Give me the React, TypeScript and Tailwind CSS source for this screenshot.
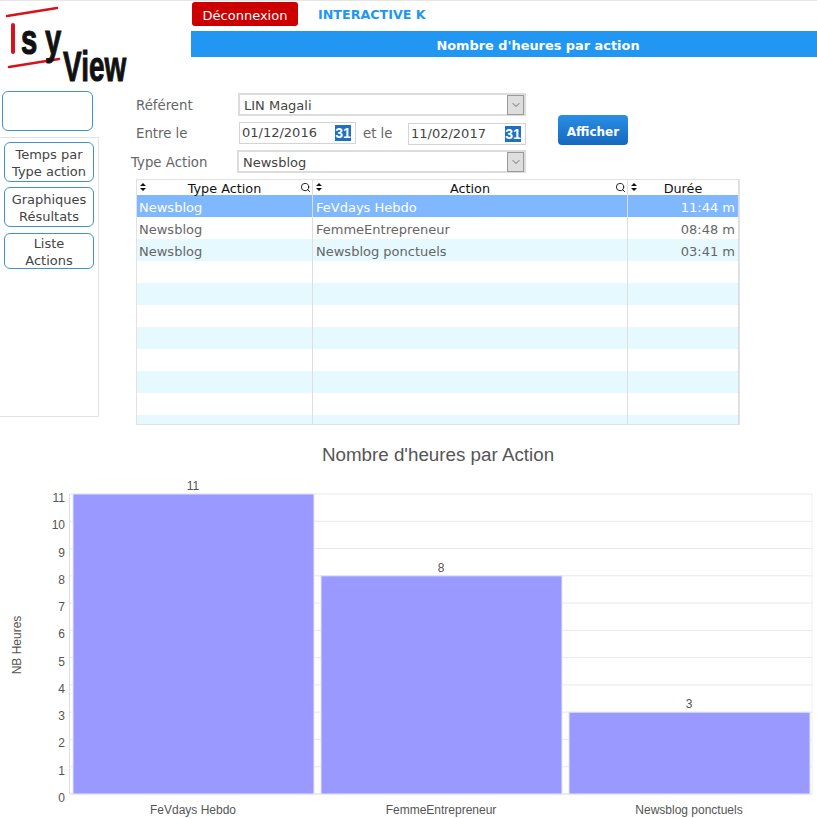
import { ChevronDown, Search } from "lucide-react";

const verdana = "font-['DejaVu_Sans','Liberation_Sans',sans-serif]";

const rows = [
  { type: "Newsblog", action: "FeVdays Hebdo", time: "11:44 m" },
  { type: "Newsblog", action: "FemmeEntrepreneur", time: "08:48 m" },
  { type: "Newsblog", action: "Newsblog ponctuels", time: "03:41 m" },
  { type: "", action: "", time: "" },
  { type: "", action: "", time: "" },
  { type: "", action: "", time: "" },
  { type: "", action: "", time: "" },
  { type: "", action: "", time: "" },
  { type: "", action: "", time: "" },
  { type: "", action: "", time: "" },
  { type: "", action: "", time: "" },
];

const Logo = () => (
  <svg width="131" height="90" viewBox="0 0 131 90" className="block" fontFamily="Liberation Sans" fontWeight="700" fontSize="43" fill="#111" stroke="#111">
    <path d="M7 15 L57 7" stroke="#d8121c" strokeWidth="2.5" strokeLinecap="round" />
    <path d="M13 24 L13 51" stroke="#d8121c" strokeWidth="4" strokeLinecap="round" />
    <path d="M9 66 L59 58" stroke="#d8121c" strokeWidth="2.5" strokeLinecap="round" />
    <text transform="translate(21 53) scale(0.68 1)" strokeWidth="1.2">s</text>
    <text transform="translate(45 53) scale(0.68 1)" strokeWidth="1">y</text>
    <text transform="translate(63 80) scale(0.65 1)" strokeWidth="1">View</text>
  </svg>
);

const SelectBox = ({ value, className }: { value: string; className: string }) => (
  <div className={`flex h-[23px] items-center justify-between border-2 border-[#dcdcdc] bg-white pl-[4px] ${className}`}>
    <span className="pt-[2px] text-[13px] text-[#444]">{value}</span>
    <span className="flex h-[20px] w-[17px] items-center justify-center border border-[#9a9a9a] bg-[#dedede]">
      <ChevronDown size={12} strokeWidth={1.5} className="text-[#444]" />
    </span>
  </div>
);

const DateBox = ({ value, className }: { value: string; className: string }) => (
  <div className={`flex h-[22px] items-center justify-between border border-[#d4d4d4] bg-white pl-[2px] ${className}`}>
    <span className="text-[13px] text-[#444]">{value}</span>
    <span className="flex h-[16px] w-[16px] items-center justify-center bg-[#1f6fc4] font-['Liberation_Sans',sans-serif] text-[14px] font-bold text-white">
      31
    </span>
  </div>
);

const SideButton = ({ lines, className }: { lines: string[]; className: string }) => (
  <div className={`ml-[4px] flex w-[90px] flex-col items-center justify-center rounded-[6px] border border-[#3f95c9] pt-[1px] text-[13px] leading-[17px] text-[#444] ${className}`}>
    {lines.map((l) => (
      <span key={l}>{l}</span>
    ))}
  </div>
);

const SortIcon = () => (
  <svg width="6" height="8" viewBox="0 0 6 8" className="absolute left-[3px] top-[3px]">
    <path d="M3 0 L6 3 H0 Z M3 8 L0 5 H6 Z" fill="#111" />
  </svg>
);

const Chart = () => {
  const left = 70;
  const right = 812;
  const base = 794;
  const top = 494;
  const step = (base - top) / 11;
  const ticks = Array.from({ length: 12 }, (_, i) => i);
  const bars = [
    { x: 73, v: 11, label: "FeVdays Hebdo" },
    { x: 321, v: 8, label: "FemmeEntrepreneur" },
    { x: 569, v: 3, label: "Newsblog ponctuels" },
  ];
  return (
    <svg width="817" height="383" viewBox="0 435 817 383" className="block" fontFamily="Liberation Sans">
      <text x="438" y="461" textAnchor="middle" fontSize="18.8" fill="#555">
        Nombre d'heures par Action
      </text>
      {ticks.map((t) => {
        const y = base - t * step;
        return (
          <g key={t}>
            <line x1={left} x2={right} y1={y} y2={y} stroke={t === 0 ? "#d8d8e0" : "#e8e8e8"} />
            <text x="65" y={y + 8} textAnchor="end" fontSize="12" fill="#555">
              {t}
            </text>
          </g>
        );
      })}
      <line x1={left - 0.5} x2={left - 0.5} y1={top} y2={base} stroke="#dedede" />
      <line x1={right} x2={right} y1={top} y2={base} stroke="#eeeeee" />
      {bars.map((b) => (
        <g key={b.label}>
          <rect x={b.x} y={base - b.v * step} width="241" height={b.v * step} fill="#9999ff" stroke="#e4e4ff" />
          <text x={b.x + 120} y={base - b.v * step - 4} textAnchor="middle" fontSize="12" fill="#555">
            {b.v}
          </text>
          <text x={b.x + 120} y="814" textAnchor="middle" fontSize="12" fill="#555">
            {b.label}
          </text>
        </g>
      ))}
      <text transform="translate(21 645) rotate(-90)" textAnchor="middle" fontSize="12" fill="#555">
        NB Heures
      </text>
    </svg>
  );
};

export default function App() {
  return (
    <div className={`h-[818px] w-[817px] overflow-hidden border-t border-[#e6e6e6] bg-white ${verdana}`}>
      <div className="flex h-[434px]">
        {/* left column */}
        <div className="w-[131px] shrink-0">
          <Logo />
          <div className="ml-[2px] h-[40px] w-[91px] rounded-[6px] border border-[#3f95c9]" />
          <div className="mt-[6px] flex h-[280px] w-[99px] flex-col border-y border-r border-[#e2e2e2] pt-[4px]">
            <SideButton lines={["Temps par", "Type action"]} className="h-[40px]" />
            <SideButton lines={["Graphiques", "Résultats"]} className="mt-[5px] h-[40px]" />
            <SideButton lines={["Liste", "Actions"]} className="mt-[6px] h-[36px]" />
          </div>
        </div>

        <div className="min-w-0 flex-1">
          {/* header */}
          <div className="ml-[60px]">
            <div className="flex h-[30px] items-start pt-[1px]">
              <div className="ml-[1px] flex h-[24px] w-[106px] items-center justify-center rounded-[3px] bg-[#cc0000] pt-[4px] text-[13px] text-white">
                Déconnexion
              </div>
              <span className="ml-[20px] mt-[5px] text-[12.7px] font-bold leading-[16px] text-[#2196f3]">INTERACTIVE K</span>
            </div>
            <div className="flex h-[26px] items-center justify-center bg-[#2196f3] pl-[68px] pt-[4px] text-[12.9px] font-bold text-white">
              Nombre d'heures par action
            </div>
          </div>

          {/* form */}
          <div className="relative mt-[36px] h-[86px] text-[13.3px] text-[#666]">
            <div className="flex h-[23px] items-center">
              <span className="ml-[5px] w-[102px] pt-[2px]">Référent</span>
              <SelectBox value="LIN Magali" className="w-[288px]" />
            </div>
            <div className="mt-[6px] flex h-[23px] items-start">
              <span className="ml-[5px] w-[103px] pt-[2px]">Entre le</span>
              <DateBox value="01/12/2016" className="w-[117px] pr-[4px]" />
              <span className="ml-[7px] w-[45px] pt-[2px]">et le</span>
              <DateBox value="11/02/2017" className="mt-[1px] w-[118px] pr-[4px]" />
            </div>
            <div className="mt-[5px] flex h-[23px] items-center">
              <span className="w-[106px] pt-[2px]">Type Action</span>
              <SelectBox value="Newsblog" className="w-[289px]" />
            </div>
            <div className="absolute left-[427px] top-[22px] flex h-[30px] w-[70px] items-center justify-center rounded-[4px] bg-gradient-to-b from-[#2a8fe6] to-[#1668bd] pt-[4px] text-[12px] font-bold text-white">
              Afficher
            </div>
          </div>

          {/* table */}
          <div className="ml-[5px] h-[246px] w-[604px] overflow-hidden border border-[#e2e2e2] text-[13px]">
            <div className="flex h-[15px] text-[12.8px] leading-[18px] text-[#111]">
              <div className="relative w-[176px] border-r border-[#dedede] text-center">
                <SortIcon />
                Type Action
                <Search size={11} strokeWidth={2} className="absolute right-[1px] top-[2px]" />
              </div>
              <div className="relative w-[315px] border-r border-[#dedede] text-center">
                <SortIcon />
                Action
                <Search size={11} strokeWidth={2} className="absolute right-[1px] top-[2px]" />
              </div>
              <div className="relative w-[111px] border-r border-[#dedede] text-center">
                <SortIcon />
                Durée
              </div>
            </div>
            {rows.map((r, i) => (
              <div
                key={i}
                className={`flex h-[22px] items-center ${i === 0 ? "bg-[#7fb8ff] text-white" : i % 2 === 0 ? "bg-[#e5f9ff] text-[#666]" : "bg-white text-[#666]"}`}
              >
                <div className="h-full w-[176px] border-r border-[#dedede] pl-[2px] leading-[26px]">{r.type}</div>
                <div className="h-full w-[315px] border-r border-[#dedede] pl-[3px] leading-[26px]">{r.action}</div>
                <div className="h-full w-[111px] border-r border-[#dedede] pr-[3px] text-right leading-[26px]">{r.time}</div>
              </div>
            ))}
          </div>
        </div>
      </div>
      <Chart />
    </div>
  );
}
